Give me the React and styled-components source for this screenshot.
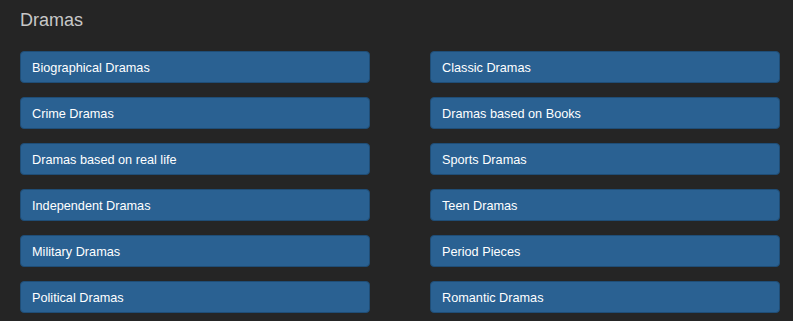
import React from 'react'
import styled, { createGlobalStyle } from 'styled-components'

const GlobalStyle = createGlobalStyle`
  html, body {
    margin: 0;
    padding: 0;
    background: #252525;
  }
  body {
    font-family: "Liberation Sans", Arial, sans-serif;
  }
`

const Page = styled.div`
  padding: 10px 13px 8px 20px;
  min-height: 321px;
  box-sizing: border-box;
  background: #252525;
`

const Heading = styled.h2`
  margin: 0 0 21px;
  font-size: 18px;
  font-weight: normal;
  line-height: 20px;
  color: #c8c8c8;
`

const Grid = styled.div`
  display: grid;
  grid-template-columns: 350px 350px;
  column-gap: 60px;
  row-gap: 14px;
`

const Genre = styled.a`
  display: flex;
  align-items: center;
  height: 32px;
  box-sizing: border-box;
  padding: 2px 11px 0;
  background: #2a6192;
  border: 1px solid #1f4d76;
  border-radius: 4px;
  color: #fff;
  font-size: 12.7px;
  text-decoration: none;
  cursor: pointer;
`

const genres = [
  'Biographical Dramas', 'Classic Dramas',
  'Crime Dramas', 'Dramas based on Books',
  'Dramas based on real life', 'Sports Dramas',
  'Independent Dramas', 'Teen Dramas',
  'Military Dramas', 'Period Pieces',
  'Political Dramas', 'Romantic Dramas',
]

const App = () => {
  return (
    <>
      <GlobalStyle />
      <Page>
        <Heading>Dramas</Heading>
        <Grid>
          {genres.map(name => <Genre key={name}>{name}</Genre>)}
        </Grid>
      </Page>
    </>
  )
}

export default App
